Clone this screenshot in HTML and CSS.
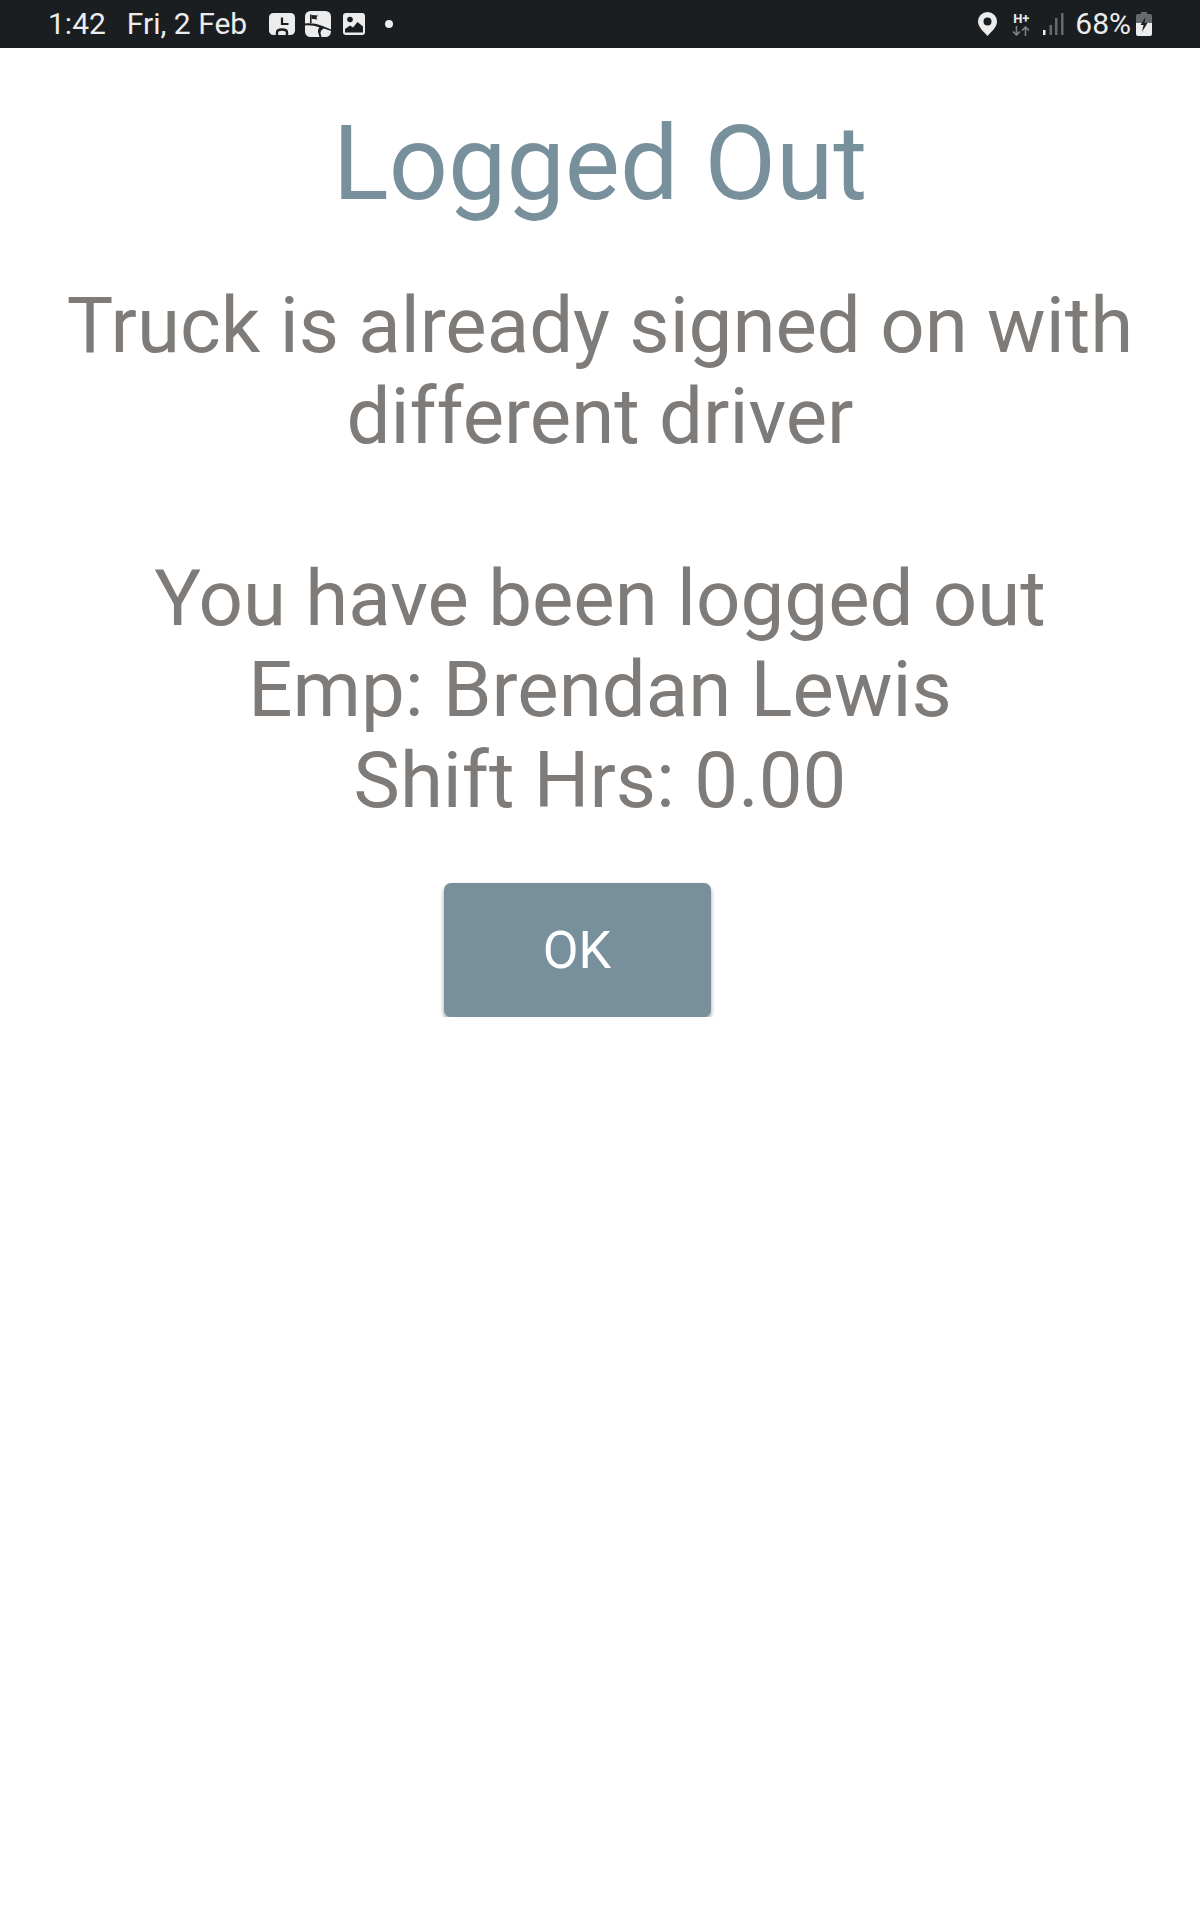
FILE: index.html
```html
<!DOCTYPE html>
<html lang="en">
<head>
    <meta charset="UTF-8">
    <meta name="viewport" content="width=device-width, initial-scale=1.0">
    <title>Logged Out</title>
    <link rel="stylesheet" href="styles.css">
</head>
<body>
    <div class="status-bar">
        <div class="status-left">
            <span class="status-text">1:42</span>
            <span class="status-text status-date">Fri, 2 Feb</span>
            <div class="status-icons">
                <svg width="26" height="22" viewBox="0 0 26 22"><rect width="26" height="22" rx="4.500" fill="#ececec"/><path fill="none" stroke="#1a1e21" stroke-width="2.200" d="M13 4.500v6.500h6.500"/><path fill="none" stroke="#1a1e21" stroke-width="2.400" d="M8 22v-2.500c0-2 1.800-3 5-3s5 1 5 3V22"/></svg>
                <svg width="26" height="26" viewBox="0 0 26 26"><rect width="26" height="26" rx="5.500" fill="#ececec"/><path fill="#1a1e21" d="M5 3.500h1.600v8.500H5z"/><path fill="#1a1e21" d="M6.600 4l6.400.5-1.700 2 1.200 2-5.900-.8z"/><path fill="#1a1e21" d="M0 12.500c7-1 13 .5 17.500 2.500 3 1.300 6 2.500 8.500 3.500v1.500l-7-2.500c-2 .5-3.500 2.500-3.500 4.500l1 4h-2l-1.500-5c-.3-2 .5-3.500 1.500-4.500C10 15 5 14 0 14.500z"/></svg>
                <svg class="icon-image" width="22" height="22" viewBox="0 0 22 22"><rect width="22" height="22" rx="3" fill="#ececec"/><circle cx="7" cy="6.500" r="2.800" fill="#1a1e21"/><path fill="#1a1e21" d="M2 19.500v-3.500l5-3.500 3 2 4.500-5.500 5.500 4.500v6z"/></svg>
                <span class="status-dot"></span>
            </div>
        </div>
        <div class="status-right">
            <svg class="icon-pin" width="19" height="24" viewBox="0 0 19 24"><path fill="#ececec" fill-rule="evenodd" d="M9.500 0A9.500 9.500 0 0 1 19 9.500C19 15 13.500 19.500 9.500 24 5.500 19.500 0 15 0 9.500A9.500 9.500 0 0 1 9.500 0zm0 5.500a4 4 0 1 0 0 8 4 4 0 0 0 0-8z"/></svg>
            <div class="net-type">
                <span class="net-label">H+</span>
                <svg width="18" height="10" viewBox="0 0 18 10"><path fill="none" stroke="#808385" stroke-width="1.600" d="M4.500 0v9M1 5.500l3.500 3.500L8 5.500M13.500 10V1M10 4.500L13.500 1 17 4.500"/></svg>
            </div>
            <svg class="icon-signal" width="21" height="24" viewBox="0 0 21 24"><path fill="#ececec" d="M0 18h2.500v5H0z"/><path fill="#666a6c" d="M6.500 13H9v10H6.500zM12 6h2.500v17H12zM18 1h2.500v22H18z"/></svg>
            <span class="status-text status-battery-text">68%</span>
            <svg width="16" height="24" viewBox="0 0 16 24"><path fill="#666a6c" d="M5 0h6v2h3a2 2 0 0 1 2 2v7H0V4a2 2 0 0 1 2-2h3z"/><path fill="#ececec" d="M0 11h16v11a2 2 0 0 1-2 2H2a2 2 0 0 1-2-2z"/><path fill="#1a1e21" d="M9.500 5L4.500 13h3L6 20l5.500-9H8.500z"/></svg>
        </div>
    </div>

    <main class="content">
        <h1 class="title">Logged Out</h1>
        <p class="message">Truck is already signed on with different driver<br><br>You have been logged out<br>Emp: Brendan Lewis<br>Shift Hrs: 0.00</p>
        <div class="button-row">
            <button class="ok-button">OK</button>
        </div>
    </main>
</body>
</html>
```

FILE: styles.css
```css
body {
    margin: 0;
    background-color: #fff;
    font-family: Roboto, sans-serif;
}

.status-bar {
    height: 48px;
    background-color: #1a1e21;
    color: #ececec;
    display: flex;
    justify-content: space-between;
    align-items: center;
    padding: 0 48px;
    font-size: 30px;
}

.status-left, .status-right, .status-icons {
    display: flex;
    align-items: center;
}

.status-text {
    margin-bottom: 2px;
}

.status-date {
    margin-left: 21px;
}

.status-icons {
    margin-left: 22px;
    gap: 10px;
}

.icon-image {
    margin-left: 2px;
}

.status-dot {
    width: 8px;
    height: 8px;
    margin-left: 10px;
    border-radius: 50%;
    background-color: #ececec;
}

.icon-pin {
    margin-right: 15px;
}

.net-type {
    display: flex;
    flex-direction: column;
    align-items: center;
    gap: 2px;
    margin-right: 13px;
}

.net-label {
    font-size: 13px;
    font-weight: 700;
    line-height: 11px;
}

.status-battery-text {
    margin-left: 11px;
    margin-right: 5px;
}

.content {
    padding: 0 20px;
    text-align: center;
}

.title {
    margin: 0;
    padding-top: 55px;
    font-size: 104px;
    font-weight: 400;
    line-height: 122px;
    color: #78909c;
}

.message {
    margin: 55px 0 0;
    font-size: 78px;
    line-height: 91px;
    color: #7f7b78;
}

.button-row {
    display: flex;
    justify-content: center;
    margin-top: 57px;
    padding-right: 46px;
}

.ok-button {
    width: 267px;
    height: 134px;
    border: none;
    border-radius: 7px;
    background-color: #78909c;
    color: #fff;
    font-family: Roboto, sans-serif;
    font-size: 52px;
    box-shadow: 0 3px 4px rgba(0, 0, 0, 0.4);
}
```
